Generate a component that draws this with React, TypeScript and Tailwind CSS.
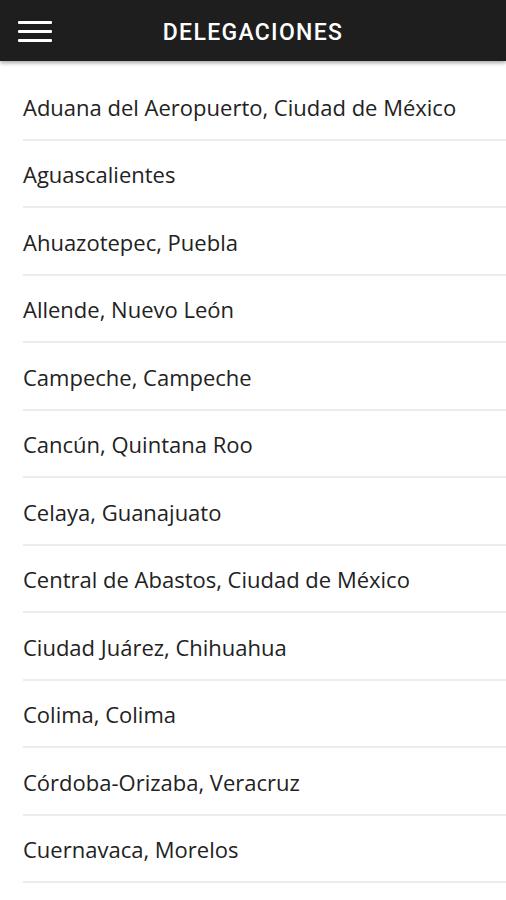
import React from "react";

const delegaciones = [
  "Aduana del Aeropuerto, Ciudad de México",
  "Aguascalientes",
  "Ahuazotepec, Puebla",
  "Allende, Nuevo León",
  "Campeche, Campeche",
  "Cancún, Quintana Roo",
  "Celaya, Guanajuato",
  "Central de Abastos, Ciudad de México",
  "Ciudad Juárez, Chihuahua",
  "Colima, Colima",
  "Córdoba-Orizaba, Veracruz",
  "Cuernavaca, Morelos",
];

export default function App() {
  return (
    <div className="w-[506px] h-[900px] overflow-hidden bg-white font-['Open_Sans',sans-serif]">
      {/* Top bar */}
      <header className="relative z-10 h-[61px] bg-[#1e1e1e] flex items-center shadow-[0_2px_4px_rgba(0,0,0,0.35)]">
        <button className="w-[70px] h-full flex items-center justify-center pt-[2px]">
          <svg width="34" height="21" viewBox="0 0 34 21">
            <rect x="0" y="0" width="34" height="3" rx="1" fill="#fff" />
            <rect x="0" y="9" width="34" height="3" rx="1" fill="#fff" />
            <rect x="0" y="18" width="34" height="3" rx="1" fill="#fff" />
          </svg>
        </button>
        <h1 className="absolute left-0 right-0 pt-[5px] text-center text-white font-['Roboto',sans-serif] text-[23px] font-medium tracking-[1.3px] pointer-events-none">
          DELEGACIONES
        </h1>
      </header>

      {/* List */}
      <ul className="pt-[12px]">
        {delegaciones.map((d) => (
          <li key={d} className="ml-[23px] h-[67.5px] pt-[3px] flex items-center border-b-2 border-[#ececec] text-[22px] text-[#222]">
            {d}
          </li>
        ))}
      </ul>
    </div>
  );
}
